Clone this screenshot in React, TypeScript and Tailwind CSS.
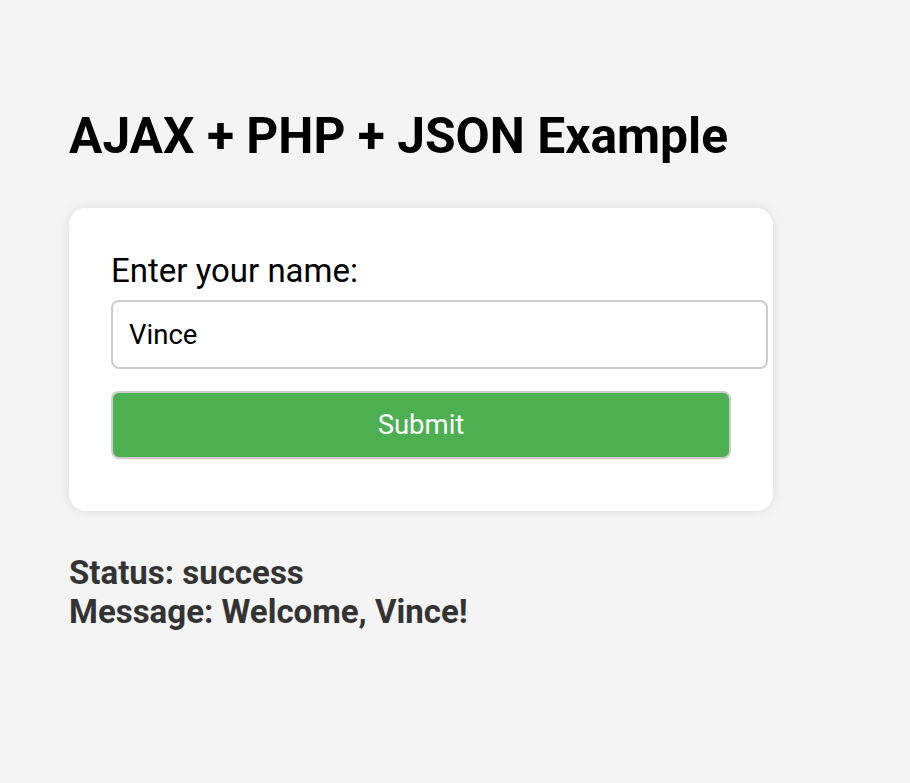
import React from "react";

export default function App() {
  return (
    <div className="min-h-[783px] bg-[#f4f4f4] pl-[69px] pt-[105px] text-black" style={{ fontFamily: "Roboto, 'Noto Sans', sans-serif" }}>
      <h1 className="text-[49.7px] font-bold leading-[62px]">AJAX + PHP + JSON Example</h1>
      <div className="mt-[41px] w-[704px] h-[303px] rounded-[17px] bg-white px-[42px] pt-[44px] shadow-[0_0_12px_rgba(0,0,0,0.1)]">
        <div className="text-[33px] leading-[38px]">Enter your name:</div>
        <div className="mt-[10px] flex h-[69px] w-[657px] items-center rounded-[8px] border-2 border-[#cccccc] bg-white pl-[16px] text-[27.5px]">Vince</div>
        <button className="mt-[22px] flex h-[68px] w-[620px] items-center justify-center rounded-[8px] border-2 border-[#cccccc] bg-[#4caf50] text-[27.5px] text-white">Submit</button>
      </div>
      <div className="mt-[42px] text-[33px] font-bold leading-[39px] text-[#333333]">
        <div>Status: success</div>
        <div>Message: Welcome, Vince!</div>
      </div>
    </div>
  );
}
